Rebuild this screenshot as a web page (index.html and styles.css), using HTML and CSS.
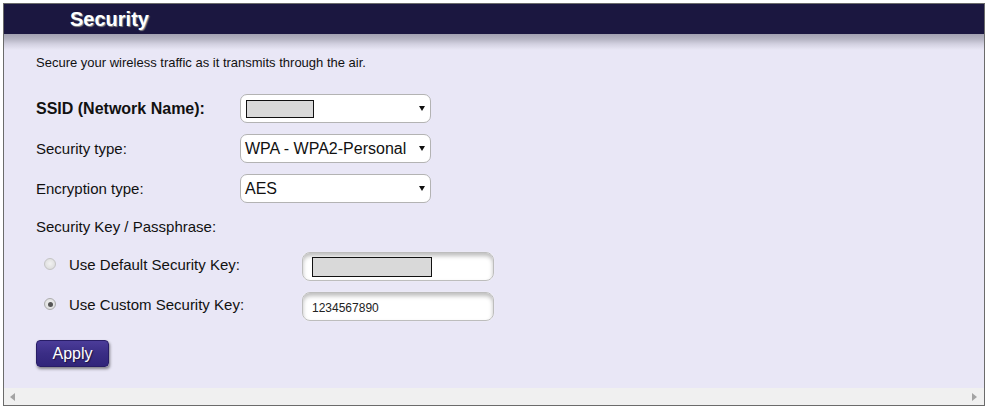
FILE: index.html
```html
<!DOCTYPE html>
<html>
<head>
<meta charset="utf-8">
<link rel="stylesheet" href="styles.css">
</head>
<body>
<div class="frame">
  <div class="header"><h1 class="title">Security</h1></div>
  <div class="content">
    <p class="desc">Secure your wireless traffic as it transmits through the air.</p>
    <div class="form">
      <div class="row">
        <span class="label bold">SSID (Network Name):</span>
        <div class="select">
          <span class="redact ssid"></span>
          <svg class="caret" width="6" height="5" viewBox="0 0 6 5"><path d="M0 0H6L3 5Z" fill="#111"/></svg>
        </div>
      </div>
      <div class="row">
        <span class="label">Security type:</span>
        <div class="select">
          <span class="seltext">WPA - WPA2-Personal</span>
          <svg class="caret" width="6" height="5" viewBox="0 0 6 5"><path d="M0 0H6L3 5Z" fill="#111"/></svg>
        </div>
      </div>
      <div class="row">
        <span class="label">Encryption type:</span>
        <div class="select">
          <span class="seltext">AES</span>
          <svg class="caret" width="6" height="5" viewBox="0 0 6 5"><path d="M0 0H6L3 5Z" fill="#111"/></svg>
        </div>
      </div>
    </div>
    <p class="keyhead">Security Key / Passphrase:</p>
    <div class="keys">
      <div class="keyrow">
        <span class="radio"></span>
        <span class="keylabel">Use Default Security Key:</span>
        <div class="textbox"><span class="redact key"></span></div>
      </div>
      <div class="keyrow">
        <span class="radio checked"></span>
        <span class="keylabel">Use Custom Security Key:</span>
        <div class="textbox"><span class="boxtext">1234567890</span></div>
      </div>
    </div>
    <button class="apply">Apply</button>
  </div>
  <div class="hscroll">
    <svg width="5" height="8" viewBox="0 0 5 8"><path d="M5 0V8L0 4Z" fill="#a3a3a3"/></svg>
    <svg width="5" height="8" viewBox="0 0 5 8"><path d="M0 0V8L5 4Z" fill="#a3a3a3"/></svg>
  </div>
</div>
</body>
</html>
```

FILE: styles.css
```css
html, body {
  margin: 0;
  padding: 0;
  background: #ffffff;
}

body {
  font-family: "Liberation Sans", Arial, sans-serif;
  color: #111111;
}

.frame {
  margin: 3px 0 0 3px;
  width: 982px;
  height: 403px;
  box-sizing: border-box;
  border: 1px solid #6b6b6b;
  display: flex;
  flex-direction: column;
  background: #e9e7f6;
}

.header {
  height: 30px;
  background: #1b1740;
  padding-left: 66px;
  flex: none;
}

.title {
  margin: 0;
  font-size: 20px;
  line-height: 30px;
  font-weight: bold;
  color: #ffffff;
  text-shadow: 1px 1px 1px #8a8a8a;
}

.content {
  flex: 1;
  padding: 21px 0 0 32px;
  background: linear-gradient(to bottom, #a2a1b1 0px, #b4b3c2 5px, #d2d0e0 10px, #e9e7f6 16px);
}

.desc {
  margin: 0;
  font-size: 13px;
  line-height: 16px;
}

.form {
  margin-top: 23px;
  display: flex;
  flex-direction: column;
  gap: 11px;
}

.row {
  display: flex;
  align-items: center;
  height: 29px;
}

.label {
  width: 204px;
  font-size: 15px;
}

.label.bold {
  font-size: 16px;
  font-weight: bold;
}

.select {
  width: 191px;
  height: 29px;
  box-sizing: border-box;
  border: 1px solid #b3b3b3;
  border-radius: 7px;
  background: #ffffff;
  display: flex;
  align-items: center;
  justify-content: space-between;
  padding: 0 5px 0 4px;
}

.seltext {
  font-size: 16px;
  color: #111111;
}

.caret {
  display: block;
  flex: none;
}

.redact {
  display: block;
  box-sizing: border-box;
  background: #d9d9d9;
  border: 1px solid #111111;
}

.redact.ssid {
  width: 68px;
  height: 18px;
  margin-left: 1px;
}

.redact.key {
  width: 120px;
  height: 20px;
}

.keyhead {
  margin: 15px 0 0 0;
  font-size: 15px;
  line-height: 18px;
}

.keys {
  margin-top: 16px;
  display: flex;
  flex-direction: column;
  gap: 11px;
}

.keyrow {
  display: flex;
  align-items: center;
  height: 29px;
  padding-left: 8px;
}

.radio {
  width: 12px;
  height: 12px;
  box-sizing: border-box;
  border-radius: 50%;
  border: 1px solid #c4c4c4;
  background: radial-gradient(circle at 50% 45%, #f2f2f2 0, #e2e2e2 60%, #d4d4d4 100%);
  margin-right: 13px;
  margin-bottom: 5px;
  display: flex;
  align-items: center;
  justify-content: center;
  flex: none;
}

.radio.checked {
  border-color: #adadad;
}

.radio.checked::after {
  content: "";
  width: 5px;
  height: 5px;
  border-radius: 50%;
  background: #555555;
}

.keylabel {
  width: 233px;
  font-size: 15px;
  margin-bottom: 4px;
}

.textbox {
  width: 192px;
  height: 29px;
  box-sizing: border-box;
  border: 1px solid #bdbdbd;
  border-radius: 8px;
  background: #ffffff;
  box-shadow: inset 0 3px 4px rgba(0, 0, 0, 0.26), 0 0 1px rgba(255, 255, 255, 0.9);
  display: flex;
  align-items: center;
  padding-left: 9px;
}

.boxtext {
  font-size: 12px;
  color: #222222;
  margin-top: 2px;
}

.apply {
  margin-top: 19px;
  width: 73px;
  height: 27px;
  padding: 0;
  border: 1px solid #281d66;
  border-radius: 4px;
  background: linear-gradient(to bottom, #4b3c99 0%, #3a2d85 50%, #31257a 100%);
  box-shadow: 1px 2px 3px rgba(0, 0, 0, 0.45);
  color: #ffffff;
  font-family: "Liberation Sans", Arial, sans-serif;
  font-size: 16px;
  text-shadow: 1px 1px 1px rgba(0, 0, 0, 0.5);
}

.hscroll {
  flex: none;
  height: 17px;
  background: #f0f0f0;
  display: flex;
  align-items: center;
  justify-content: space-between;
  padding: 0 7px 0 6px;
}

.hscroll svg {
  display: block;
}
```
